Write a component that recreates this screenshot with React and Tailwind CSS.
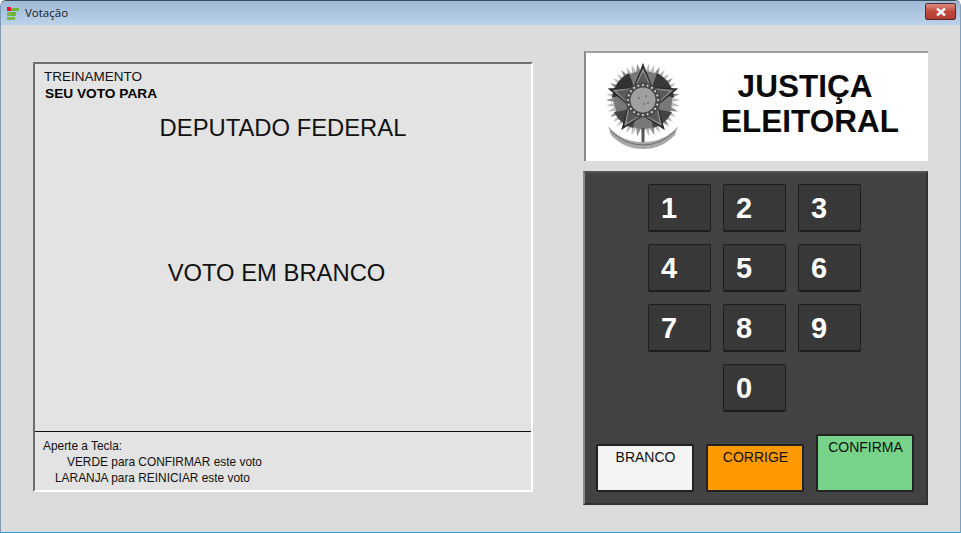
import React from 'react';

const KEYS = ['1', '2', '3', '4', '5', '6', '7', '8', '9'];

const starPoints = (cx, cy, outer, inner) => {
  const pts = [];
  for (let i = 0; i < 10; i++) {
    const r = i % 2 === 0 ? outer : inner;
    const a = (-90 + i * 36) * (Math.PI / 180);
    pts.push(`${(cx + r * Math.cos(a)).toFixed(1)},${(cy + r * Math.sin(a)).toFixed(1)}`);
  }
  return pts.join(' ');
};

function Emblem() {
  const rays = Array.from({ length: 40 }, (_, i) => (i * 360) / 40);
  const dots = Array.from({ length: 20 }, (_, i) => (i * 360) / 20);
  return (
    <svg width="84" height="96" viewBox="0 0 84 96" className="shrink-0">
      <g transform="translate(41,41)">
        {/* wreath */}
        {rays.map((a, i) => (
          <path key={a} d="M-3.5 -24 L0 -37 L3.5 -24 Z" fill={i % 3 === 0 ? '#8c8c8c' : '#bcbcbc'} transform={`rotate(${a})`} />
        ))}
        <circle r="29" fill="#787878" />
        <path d="M-31 -2 A31 31 0 0 1 -14 -27 L-8 -10 Z" fill="#333333" />
        <path d="M31 -2 A31 31 0 0 0 14 -27 L8 -10 Z" fill="#383838" />
        <path d="M-29 12 A31 31 0 0 0 -10 28 L-6 8 Z" fill="#444444" />
        <path d="M29 12 A31 31 0 0 1 10 28 L6 8 Z" fill="#444444" />
        {/* star */}
        <polygon points={starPoints(0, 0, 37, 16)} fill="#2b2b2b" />
        <polygon points={starPoints(0, 0, 32, 15)} fill="#8a8a8a" />
        <polygon points={starPoints(0, 0, 28, 14)} fill="#5a5a5a" />
        {/* centre */}
        <circle r="17.5" fill="#4a4a4a" />
        {dots.map((a) => (
          <circle key={a} cx="0" cy="-15" r="1" fill="#dedede" transform={`rotate(${a})`} />
        ))}
        <circle r="12.5" fill="#a0a0a0" />
        <circle cx="-4" cy="-2" r="1" fill="#6e6e6e" />
        <circle cx="3" cy="-4" r="1" fill="#6e6e6e" />
        <circle cx="1" cy="4" r="1" fill="#6e6e6e" />
        <circle cx="5" cy="3" r="1" fill="#6e6e6e" />
        {/* sword and ribbon */}
        <rect x="-1.5" y="28" width="3" height="14" fill="#555555" />
        <path d="M-35 26 Q-22 42 0 42 Q22 42 35 26 L32 35 Q19 49 0 49 Q-19 49 -32 35 Z" fill="#a8a8a8" />
        <path d="M-32 31 Q-18 45 0 45 Q18 45 32 31" fill="none" stroke="#6c6c6c" strokeWidth="1" />
      </g>
    </svg>
  );
}

function NumKey({ children }) {
  return (
    <button
      type="button"
      className="flex h-12 w-[63px] items-center rounded-[2px] border border-[#1e1e1e] border-b-2 bg-[#383838] pl-[12px] pt-[2px] text-[29px] font-bold text-white"
    >
      {children}
    </button>
  );
}

function ActionKey({ className, children }) {
  return (
    <button
      type="button"
      className={`flex w-[98px] justify-center rounded-[2px] border-2 border-[#222222] pl-[2px] pt-[3px] text-sm leading-4 text-[#111111] ${className}`}
    >
      {children}
    </button>
  );
}

export default function App() {
  return (
    <div className="flex h-[533px] w-[961px] flex-col overflow-hidden rounded-t-[6px] border border-t-[#3a4a58] border-x-[#7f9db9] border-b-[#23a6d9] bg-[#dcdcdc] font-['Liberation_Sans',sans-serif]">
      <div className="flex h-[24px] shrink-0 items-center bg-gradient-to-b from-[#9fbad6] to-[#bcd2ea] pl-[6px] pr-[4px]">
        <svg width="12" height="13" viewBox="0 0 12 13" className="shrink-0">
          <rect x="0" y="0" width="4" height="4" fill="#e8112d" />
          <rect x="4" y="1" width="8" height="3" fill="#6fb53c" />
          <rect x="0" y="5" width="4" height="4" fill="#7dbb46" />
          <rect x="4" y="5" width="5" height="4" fill="#6fb53c" />
          <rect x="0" y="10" width="8" height="3" fill="#7dbb46" />
        </svg>
        <span className="ml-[6px] font-['Open_Sans',sans-serif] text-[11.5px] text-[#1a1a1a]">Votação</span>
        <div className="mb-[3px] ml-auto flex h-[17px] w-[31px] items-center justify-center rounded-[2px] border border-[#4f2a2e] bg-gradient-to-b from-[#d98a80] via-[#c0493d] to-[#b53a2e]">
          <svg width="12" height="10" viewBox="0 0 12 10">
            <path d="M2 1.5 L10 8.5 M10 1.5 L2 8.5" stroke="#f2f2f2" strokeWidth="2.6" />
          </svg>
        </div>
      </div>

      <div className="flex flex-1 items-start">
        {/* screen */}
        <div className="ml-[32px] mt-[37px] flex h-[430px] w-[500px] flex-col border-2 border-t-[#6e6e6e] border-l-[#6e6e6e] border-r-white border-b-white bg-[#e3e3e3] text-[#111111]">
          <div className="flex-1 pl-[9px] pt-[5px]">
            <div className="text-[13.5px] leading-4">TREINAMENTO</div>
            <div className="pl-px text-[13.7px] font-bold leading-[17px] text-black">SEU VOTO PARA</div>
            <div className="mt-[12px] pr-[9px] text-center text-[23.8px] leading-7">DEPUTADO FEDERAL</div>
            <div className="mt-[117px] pr-[22px] text-center text-[23.8px] leading-7">VOTO EM BRANCO</div>
          </div>
          <div className="h-[59px] border-t border-[#111111] pl-[8px] pt-[6px] text-[11.9px] leading-[16px]">
            <div>Aperte a Tecla:</div>
            <div className="pl-[24px]">VERDE para CONFIRMAR este voto</div>
            <div className="pl-[12px]">LARANJA para REINICIAR este voto</div>
          </div>
        </div>

        {/* right column */}
        <div className="ml-[50px] mt-[26px] flex w-[345px] flex-col gap-[10px]">
          <div className="ml-px flex h-[110px] items-center border-l-2 border-t-2 border-l-[#8a8a8a] border-t-[#a0a0a0] bg-white pl-[16px]">
            <Emblem />
            <div className="mb-[7px] ml-[29px] w-[190px] text-center text-[31.5px] font-bold leading-[35px] text-[#0a0a0a]">
              <span className="pr-[10px]">JUSTIÇA</span><br />ELEITORAL
            </div>
          </div>
          <div className="flex h-[334px] flex-col items-center border-2 border-l-[#8a8a8a] border-t-[#555555] border-r-[#333333] border-b-[#333333] bg-[#424242] pr-[2px] pt-[11px]">
            <div className="grid grid-cols-[63px_63px_63px] gap-x-[12px] gap-y-[12px]">
              {KEYS.map((k) => (
                <NumKey key={k}>{k}</NumKey>
              ))}
              <div className="col-start-2">
                <NumKey>0</NumKey>
              </div>
            </div>
            <div className="mt-[22px] flex items-end gap-[12px]">
              <ActionKey className="h-12 bg-[#f4f4f4]">BRANCO</ActionKey>
              <ActionKey className="h-12 bg-[#ff9900]">CORRIGE</ActionKey>
              <ActionKey className="h-[58px] bg-[#77d38a]">CONFIRMA</ActionKey>
            </div>
          </div>
        </div>
      </div>
    </div>
  );
}
